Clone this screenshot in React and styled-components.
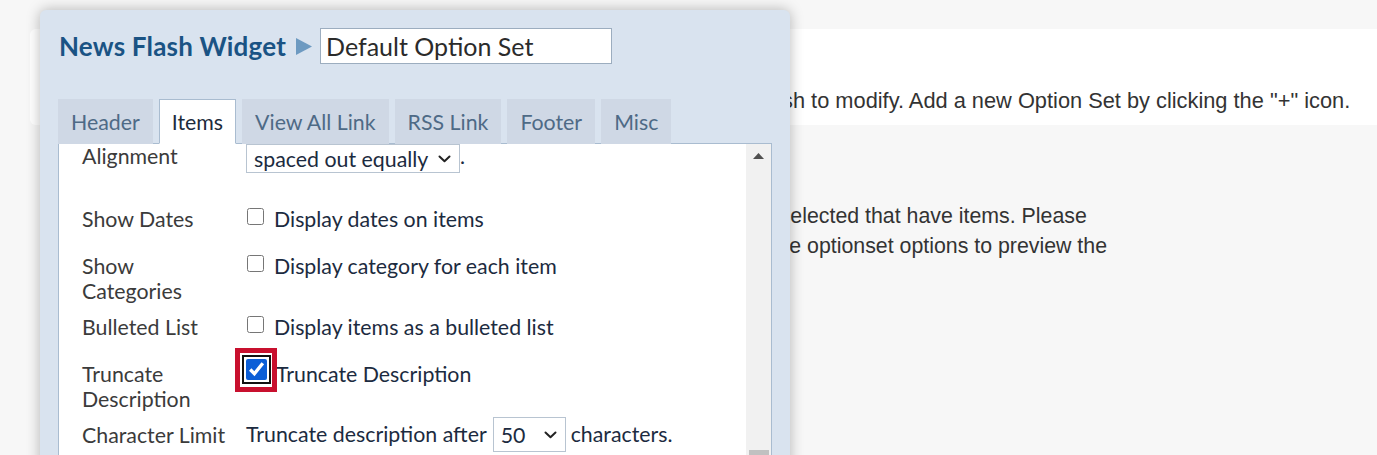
import React from "react";
import styled, { createGlobalStyle } from "styled-components";

const GlobalStyle = createGlobalStyle`
  html, body {
    margin: 0;
    padding: 0;
  }
  body {
    background: #f7f7f7;
    font-family: "Liberation Sans", Arial, sans-serif;
    color: #333;
    overflow: hidden;
  }
`;

const Page = styled.div`
  position: relative;
  height: 455px;
  overflow: hidden;
  padding-top: 29px;
  box-sizing: border-box;
`;

const IntroCard = styled.section`
  margin-left: 30px;
  height: 96px;
  box-sizing: border-box;
  padding: 57px 0 0 242px;
  background: #fff;
  border-radius: 6px 0 0 6px;
  font-size: 21.8px;
  line-height: 30px;
  white-space: nowrap;
`;

const Preview = styled.div`
  margin: 76px 0 0 430px;
  font-size: 21.33px;
  line-height: 30px;
  white-space: nowrap;
`;

const Modal = styled.div`
  position: absolute;
  left: 40px;
  top: 10px;
  width: 750px;
  height: 480px;
  box-sizing: border-box;
  padding: 18px 18px 0;
  background: #d9e3ef;
  border-radius: 6px;
  box-shadow: 0 0 14px rgba(0, 0, 0, 0.28);
  font-family: Lato, "Noto Sans", sans-serif;
  display: flex;
  flex-direction: column;
`;

const TitleRow = styled.div`
  display: flex;
  align-items: center;
  height: 36px;
`;

const Title = styled.h2`
  margin: 0 0 0 1px;
  font-size: 26px;
  letter-spacing: 0.2px;
  font-weight: 700;
  color: #1a5384;
  white-space: nowrap;
`;

const Crumb = styled.svg`
  margin: 0 8px 0 10px;
  flex-shrink: 0;
`;

const NameInput = styled.input`
  width: 292px;
  height: 36px;
  box-sizing: border-box;
  border: 1px solid #9cadbf;
  padding: 0 5px;
  font-family: Lato, "Noto Sans", sans-serif;
  font-size: 25px;
  color: #2b2b2b;
  background: #fff;
  outline: none;
`;

const TabList = styled.div`
  display: flex;
  gap: 6px;
  margin-top: 35px;
  margin-bottom: -1px;
  position: relative;
  z-index: 1;
`;

const Tab = styled.div`
  height: 45px;
  box-sizing: border-box;
  padding: 0 12px;
  display: flex;
  align-items: center;
  font-size: 21.33px;
  white-space: nowrap;
  background: ${(p) => (p.$active ? "#fff" : "#cfd8e5")};
  color: ${(p) => (p.$active ? "#1d2b3c" : "#4e6a86")};
  border: 1px solid ${(p) => (p.$active ? "#a9bcd0" : "transparent")};
  border-bottom-color: ${(p) => (p.$active ? "#fff" : "transparent")};
`;

const Panel = styled.div`
  flex: 1;
  display: flex;
  background: #fff;
  border: 1px solid #a9bcd0;
  min-height: 0;
`;

const Content = styled.div`
  flex: 1;
  padding-left: 23px;
  overflow: hidden;
`;

const Scrollbar = styled.div`
  width: 25px;
  background: #f1f1f1;
  display: flex;
  flex-direction: column;
  justify-content: space-between;
  align-items: center;
`;

const ArrowCell = styled.div`
  height: 24px;
  display: flex;
  align-items: center;
  justify-content: center;
`;

const Thumb = styled.div`
  width: 20px;
  height: 39px;
  background: #c1c1c1;
`;

const Row = styled.div`
  display: flex;
  align-items: flex-start;
  min-height: ${(p) => p.$min || 36}px;
  padding-bottom: 11px;
`;

const Label = styled.div`
  width: 164px;
  flex-shrink: 0;
  font-size: 21.33px;
  line-height: 25px;
  color: #3b3b3b;
`;

const Value = styled.div`
  display: flex;
  align-items: ${(p) => (p.$center ? "center" : "flex-start")};
  margin-top: ${(p) => p.$shift || 0}px;
  font-size: 21.33px;
  line-height: 25px;
  color: #1c2b40;
  white-space: nowrap;
`;

const Check = styled.input`
  width: 17px;
  height: 17px;
  margin: 1px 10px 0 1px;
  flex-shrink: 0;
`;

const HighlightWrap = styled.span`
  position: relative;
  display: inline-flex;
  margin: -3px 9px 0 0;
`;

const BigCheck = styled.input`
  width: 21px;
  height: 21px;
  margin: 0;
  accent-color: #0b5ed7;
  outline: 2px solid #111;
  outline-offset: 2px;
  border-radius: 3px;
`;

const Highlight = styled.span`
  position: absolute;
  inset: -11px -10px -12px -11px;
  border: 5px solid #c8102e;
  pointer-events: none;
`;

const SelectWrap = styled.span`
  position: relative;
  display: inline-flex;
  margin: ${(p) => p.$margin || "0"};
`;

const Select = styled.select`
  appearance: none;
  -webkit-appearance: none;
  width: ${(p) => p.$width}px;
  height: ${(p) => p.$height}px;
  box-sizing: border-box;
  border: 1px solid #b8c4d1;
  border-radius: 0;
  background: #fff;
  padding: 0 0 0 7px;
  font-family: Lato, "Noto Sans", sans-serif;
  font-size: 21.33px;
  color: #1c2b40;
  outline: none;
`;

const Chevron = styled.svg`
  position: absolute;
  right: 9px;
  top: 50%;
  margin-top: -4px;
  pointer-events: none;
`;

function Dropdown({ width, height, value, options, margin }) {
  return (
    <SelectWrap $margin={margin}>
      <Select $width={width} $height={height} defaultValue={value}>
        {options.map((o) => (
          <option key={o}>{o}</option>
        ))}
      </Select>
      <Chevron width="13" height="8" viewBox="0 0 13 8">
        <polyline
          points="1.5,1.5 6.5,6.2 11.5,1.5"
          fill="none"
          stroke="#222"
          strokeWidth="2"
          strokeLinecap="round"
          strokeLinejoin="round"
        />
      </Chevron>
    </SelectWrap>
  );
}

const tabs = ["Header", "Items", "View All Link", "RSS Link", "Footer", "Misc"];

export default function App() {
  return (
    <>
      <GlobalStyle />
      <Page>
        <IntroCard>
          Select the News Flash Widget Option Set that you wish to modify. Add a
          new Option Set by clicking the "+" icon.
        </IntroCard>
        <Preview>
          There are no News Flash categories selected that have items. Please
          <br />
          select some categories and change the optionset options to preview the
        </Preview>

        <Modal>
          <TitleRow>
            <Title>News Flash Widget</Title>
            <Crumb width="16" height="17" viewBox="0 0 16 17">
              <polygon points="0,0 16,8.5 0,17" fill="#6d9ac1" />
            </Crumb>
            <NameInput defaultValue="Default Option Set" />
          </TitleRow>

          <TabList>
            {tabs.map((t) => (
              <Tab key={t} $active={t === "Items"}>
                {t}
              </Tab>
            ))}
          </TabList>

          <Panel>
            <Content>
              <Row $min={52}>
                <Label>Alignment</Label>
                <Value>
                  <Dropdown
                    width={214}
                    height={29}
                    value="spaced out equally"
                    options={["left", "centered", "spaced out equally"]}
                  />
                  .
                </Value>
              </Row>
              <Row>
                <Label>Show Dates</Label>
                <Value>
                  <Check type="checkbox" />
                  Display dates on items
                </Value>
              </Row>
              <Row>
                <Label>
                  Show
                  <br />
                  Categories
                </Label>
                <Value>
                  <Check type="checkbox" />
                  Display category for each item
                </Value>
              </Row>
              <Row>
                <Label>Bulleted List</Label>
                <Value>
                  <Check type="checkbox" />
                  Display items as a bulleted list
                </Value>
              </Row>
              <Row>
                <Label>
                  Truncate
                  <br />
                  Description
                </Label>
                <Value>
                  <HighlightWrap>
                    <BigCheck type="checkbox" defaultChecked />
                    <Highlight />
                  </HighlightWrap>
                  Truncate Description
                </Value>
              </Row>
              <Row>
                <Label>Character Limit</Label>
                <Value $center $shift={-6}>
                  Truncate description after
                  <Dropdown
                    width={73}
                    height={35}
                    value="50"
                    options={["25", "50", "100", "150"]}
                    margin="0 5px 0 6px"
                  />
                  characters.
                </Value>
              </Row>
            </Content>
            <Scrollbar>
              <ArrowCell>
                <svg width="11" height="6" viewBox="0 0 11 6">
                  <polygon points="0,6 5.5,0 11,6" fill="#505050" />
                </svg>
              </ArrowCell>
              <Thumb />
            </Scrollbar>
          </Panel>
        </Modal>
      </Page>
    </>
  );
}
